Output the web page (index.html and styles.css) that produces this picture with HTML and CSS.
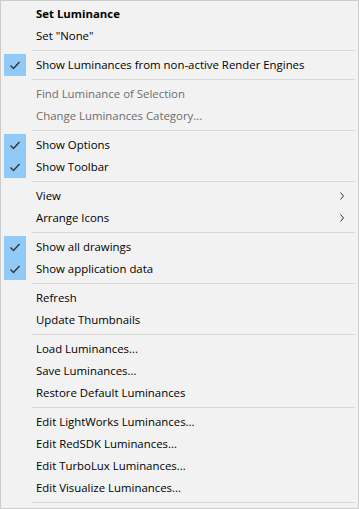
FILE: index.html
```html
<!DOCTYPE html>
<html>
    <head>
        <meta charset="UTF-8">
        <title>Luminances Menu</title>
        <link rel="stylesheet" href="styles.css">
    </head>

    <body>
        <div class="menu">
            <div class="item bold">Set Luminance</div>
            <div class="item">Set "None"</div>
            <div class="separator"></div>

            <div class="item checked">Show Luminances from non-active Render Engines</div>
            <div class="separator"></div>

            <div class="item disabled">Find Luminance of Selection</div>
            <div class="item disabled">Change Luminances Category...</div>
            <div class="separator"></div>

            <div class="item checked">Show Options</div>
            <div class="item checked">Show Toolbar</div>
            <div class="separator"></div>

            <div class="item submenu">View</div>
            <div class="item submenu">Arrange Icons</div>
            <div class="separator"></div>

            <div class="item checked">Show all drawings</div>
            <div class="item checked">Show application data</div>
            <div class="separator"></div>

            <div class="item">Refresh</div>
            <div class="item">Update Thumbnails</div>
            <div class="separator"></div>

            <div class="item">Load Luminances...</div>
            <div class="item">Save Luminances...</div>
            <div class="item">Restore Default Luminances</div>
            <div class="separator"></div>

            <div class="item">Edit LightWorks Luminances...</div>
            <div class="item">Edit RedSDK Luminances...</div>
            <div class="item">Edit TurboLux Luminances...</div>
            <div class="item">Edit Visualize Luminances...</div>
            <div class="separator"></div>
        </div>
    </body>
</html>
```

FILE: styles.css
```css
body {
    margin: 0;
    font-family: "Open Sans", "Noto Sans", sans-serif;
    font-size: 11.4px;
}

.menu {
    width: 357px;
    height: 503px;
    padding: 2px 0;
    background-color: #f2f2f2;
    border: 1px solid #cccccc;
}

.item {
    position: relative;
    height: 21px;
    line-height: 21px;
    padding-left: 35px;
    padding-bottom: 1px;
    color: #000000;
    white-space: nowrap;
}

.bold {
    font-weight: bold;
}

.disabled {
    color: #6d6d6d;
}

.checked::before {
    content: "";
    position: absolute;
    left: 3px;
    top: 0;
    width: 22px;
    height: 22px;
    background-color: #91c9f7;
    background-image: url("data:image/svg+xml,%3Csvg xmlns='http://www.w3.org/2000/svg' width='22' height='22'%3E%3Cpath d='M6.5 11.5 L9.5 14.5 L15.5 8' fill='none' stroke='%23333' stroke-width='1.4'/%3E%3C/svg%3E");
}

.submenu::after {
    content: "";
    position: absolute;
    right: 14px;
    top: 7px;
    width: 4px;
    height: 8px;
    background-image: url("data:image/svg+xml,%3Csvg xmlns='http://www.w3.org/2000/svg' width='4' height='8'%3E%3Cpath d='M0.5 0.5 L3.5 4 L0.5 7.5' fill='none' stroke='%23333' stroke-width='1'/%3E%3C/svg%3E");
}

.separator {
    height: 1px;
    margin: 3px 3px 3px 31px;
    background-color: #d7d7d7;
}
```
